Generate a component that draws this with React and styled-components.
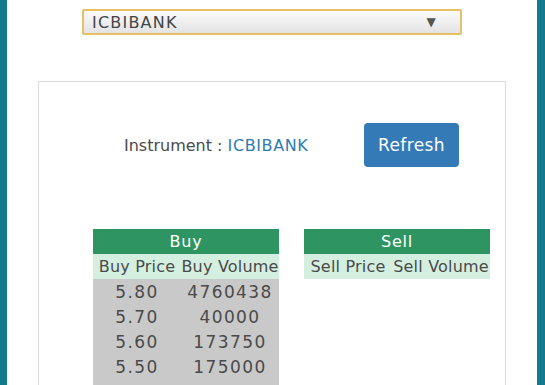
import React from 'react'
import styled, { createGlobalStyle } from 'styled-components'

const Global = createGlobalStyle`
  html, body { margin: 0; padding: 0; }
  body {
    font-family: "DejaVu Sans", "Noto Sans", sans-serif;
    background: #137a8b;
  }
`

const Page = styled.div`
  height: 385px;
  padding: 0 8px 0 7px;
  background: #137a8b;
  overflow: hidden;
`

const Sheet = styled.div`
  background: #ffffff;
  height: 100%;
  padding-top: 9px;
  box-sizing: border-box;
  display: flex;
  flex-direction: column;
  align-items: center;
`

const Select = styled.div`
  flex-shrink: 0;
  width: 380px;
  height: 26px;
  box-sizing: border-box;
  border: 2px solid #e5c064;
  border-radius: 2px;
  background: linear-gradient(#fbfbfb, #e3e3e3);
  display: flex;
  align-items: center;
  justify-content: space-between;
  padding: 0 23px 0 8px;
  color: #454545;
  font-size: 16px;
  letter-spacing: 1.2px;
`

const Arrow = styled.span`
  font-size: 12px;
  color: #555;
`

const Panel = styled.div`
  flex-shrink: 0;
  margin-top: 46px;
  width: 468px;
  height: 320px;
  box-sizing: border-box;
  border: 1px solid #dcdcdc;
  border-bottom: none;
  padding: 41px 0 0 54px;
`

const InstrumentRow = styled.div`
  display: flex;
  align-items: center;
  padding-left: 31px;
  height: 44px;
`

const Label = styled.span`
  font-size: 16px;
  color: #4a4a4a;
  width: 240px;
`

const Symbol = styled.span`
  color: #2f7bb0;
  letter-spacing: 0.6px;
`

const Button = styled.button`
  width: 95px;
  height: 44px;
  border: none;
  border-radius: 4px;
  background: #337ab7;
  color: #ffffff;
  font-family: inherit;
  font-size: 17px;
  letter-spacing: 0.4px;
`

const Tables = styled.div`
  display: flex;
  gap: 25px;
  margin-top: 62px;
`

const Book = styled.div`
  width: 186px;
`

const Head = styled.div`
  height: 25px;
  background: #2e9562;
  color: #ffffff;
  font-size: 16px;
  display: flex;
  align-items: center;
  justify-content: center;
  letter-spacing: 0.8px;
`

const Body = styled.div`
  background: #c9c9c9;
  padding-bottom: 12px;
`

const Row = styled.div`
  display: grid;
  grid-template-columns: 88px 98px;
  height: 25px;
  align-items: center;
  background: ${p => (p.sub ? '#d4efdf' : 'transparent')};
  color: #4a4a4a;
  font-size: ${p => (p.sub ? '16px' : '17px')};
  letter-spacing: ${p => (p.sub ? '0.2px' : '1.4px')};
  white-space: nowrap;
`

const Cell = styled.span`
  text-align: center;
`

const buys = [
  ['5.80', '4760438'],
  ['5.70', '40000'],
  ['5.60', '173750'],
  ['5.50', '175000'],
]

export default function App() {
  return (
    <Page>
      <Global />
      <Sheet>
        <Select>
          <span>ICBIBANK</span>
          <Arrow>▼</Arrow>
        </Select>
        <Panel>
          <InstrumentRow>
            <Label>
              Instrument : <Symbol>ICBIBANK</Symbol>
            </Label>
            <Button>Refresh</Button>
          </InstrumentRow>
          <Tables>
            <Book>
              <Head>Buy</Head>
              <Row sub>
                <Cell>Buy Price</Cell>
                <Cell>Buy Volume</Cell>
              </Row>
              <Body>
                {buys.map(([price, vol]) => (
                  <Row key={price}>
                    <Cell>{price}</Cell>
                    <Cell>{vol}</Cell>
                  </Row>
                ))}
              </Body>
            </Book>
            <Book>
              <Head>Sell</Head>
              <Row sub>
                <Cell>Sell Price</Cell>
                <Cell>Sell Volume</Cell>
              </Row>
            </Book>
          </Tables>
        </Panel>
      </Sheet>
    </Page>
  )
}
